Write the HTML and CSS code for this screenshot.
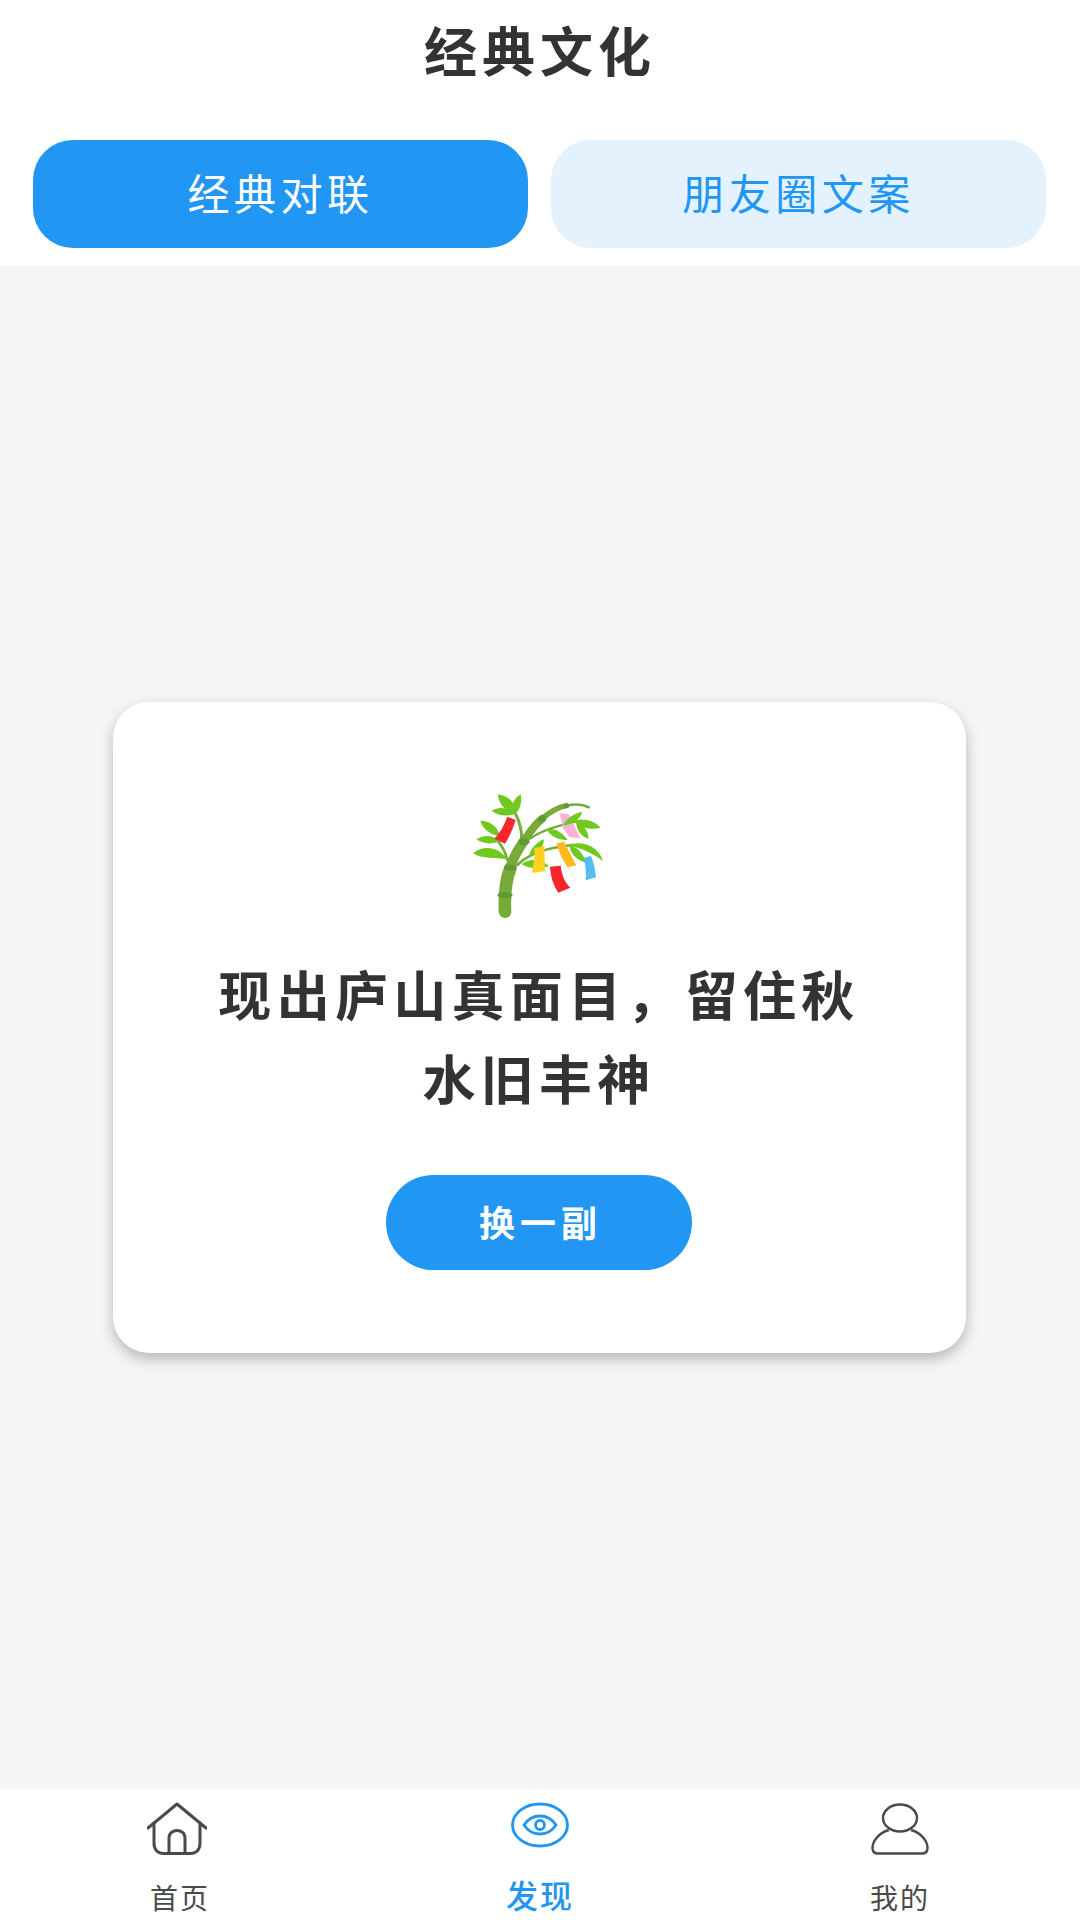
FILE: index.html
```html
<!DOCTYPE html>
<html lang="zh-CN">
<head>
    <meta charset="UTF-8">
    <meta name="viewport" content="width=device-width, initial-scale=1.0">
    <title>经典文化</title>
    <link rel="stylesheet" href="styles.css">
</head>
<body>
    <div class="page">
        <header class="top">
            <h1 class="page-title">经典文化</h1>
            <div class="tabs">
                <div class="tab tab-active">经典对联</div>
                <div class="tab">朋友圈文案</div>
            </div>
        </header>

        <main class="content">
            <section class="card">
                <svg class="bamboo" viewBox="0 0 600 480" aria-hidden="true">
                    <!-- stalk -->
                    <g fill="none" stroke="#76ab3a" stroke-linecap="round">
                        <path d="M198 425 C196 380 198 335 214 295" stroke-width="38"/>
                        <path d="M212 298 C222 265 235 240 254 214" stroke-width="30"/>
                        <path d="M254 214 C270 190 285 165 310 146" stroke-width="24"/>
                        <path d="M308 147 C330 128 355 112 382 107" stroke-width="16"/>
                        <path d="M382 107 C405 102 430 102 450 112" stroke-width="7"/>
                        <path d="M205 270 C200 250 192 232 178 215" stroke-width="8"/>
                        <path d="M248 205 C248 180 242 155 228 128" stroke-width="9"/>
                        <path d="M275 205 C310 180 360 165 425 152" stroke-width="7"/>
                        <path d="M235 285 C270 250 330 232 400 225" stroke-width="8"/>
                    </g>
                    <g fill="#5f9a34">
                        <ellipse cx="198" cy="375" rx="23" ry="9"/>
                        <ellipse cx="214" cy="293" rx="19" ry="9"/>
                        <ellipse cx="255" cy="215" rx="17" ry="10"/>
                        <ellipse cx="309" cy="146" rx="12" ry="9" transform="rotate(-35 309 146)"/>
                        <ellipse cx="382" cy="107" rx="8" ry="7"/>
                    </g>
                    <!-- pink tag sits behind the leaves -->
                    <path d="M362 130 L388 132 L424 204 L392 202 L372 175 Z" fill="#f9b3d9"/>
                    <!-- leaves -->
                    <g fill="#70c91f">
                        <path d="M176 73 C215 78 232 105 228 132 C200 125 180 105 176 73 Z"/>
                        <path d="M245 73 C250 100 242 120 228 132 C215 110 222 85 245 73 Z"/>
                        <path d="M158 122 C180 108 210 112 228 132 C205 140 178 138 158 122 Z"/>
                        <path d="M124 152 C155 152 178 172 182 198 C155 195 132 178 124 152 Z"/>
                        <path d="M112 208 C135 192 165 195 182 214 C160 224 130 222 112 208 Z"/>
                        <path d="M102 250 C130 225 180 228 204 268 C170 262 130 268 102 250 Z"/>
                        <path d="M430 125 C422 150 400 165 372 166 C382 145 405 130 430 125 Z"/>
                        <path d="M485 173 C460 145 425 145 405 155 C420 172 455 182 485 173 Z"/>
                        <path d="M448 207 C450 185 435 165 412 158 C412 180 425 198 448 207 Z"/>
                        <path d="M322 178 C345 172 372 188 386 210 C362 212 335 200 322 178 Z"/>
                        <path d="M314 208 C316 232 295 252 270 258 C275 235 292 218 314 208 Z"/>
                        <path d="M248 282 C272 262 308 268 330 288 C305 298 270 298 248 282 Z"/>
                        <path d="M492 274 C480 230 430 208 385 226 C420 232 465 250 492 274 Z"/>
                        <path d="M440 278 C435 255 418 232 392 226 C392 250 412 270 440 278 Z"/>
                    </g>
                    <!-- paper tags -->
                    <path d="M205 140 L230 150 C222 175 212 200 198 221 L166 206 C182 190 196 165 205 140 Z" fill="#f8252b"/>
                    <path d="M286 234 L316 228 L318 304 L278 309 C284 285 288 260 286 234 Z" fill="#ffd21f"/>
                    <path d="M352 220 L376 215 C388 240 400 265 412 286 L385 292 C372 270 358 245 352 220 Z" fill="#ffb81f"/>
                    <path d="M333 290 L365 287 C368 315 378 338 394 353 L358 368 C342 345 335 318 333 290 Z" fill="#f8252b"/>
                    <path d="M434 264 L456 257 C465 280 470 305 471 322 L440 331 C442 308 440 285 434 264 Z" fill="#52bfee"/>
                </svg>
                <p class="couplet">现出庐山真面目，留住秋水旧丰神</p>
                <button class="change-btn" type="button">换一副</button>
            </section>
        </main>

        <nav class="tabbar">
            <div class="nav-item">
                <svg class="nav-icon nav-icon-home" viewBox="0 0 60 52" fill="none" stroke="#4a4a4a" stroke-width="3" stroke-linecap="round" stroke-linejoin="round">
                    <path d="M1 25 L30 1 L59 25"/>
                    <path d="M7 20 V40 C7 47 11 50.5 17 50.5 H43 C49 50.5 53 47 53 40 V20"/>
                    <path d="M22 50.5 V35 C22 25 38 25 38 35 V50.5"/>
                </svg>
                <span class="nav-label">首页</span>
            </div>
            <div class="nav-item nav-item-active">
                <svg class="nav-icon" viewBox="0 0 60 52" fill="none" stroke="#2196f3" stroke-width="2.8">
                    <ellipse cx="30" cy="22" rx="27.5" ry="21"/>
                    <path d="M14 22 C22 10 38 10 46 22 C38 34 22 34 14 22 Z"/>
                    <circle cx="30" cy="22" r="4.5"/>
                </svg>
                <span class="nav-label">发现</span>
            </div>
            <div class="nav-item">
                <svg class="nav-icon" viewBox="0 0 60 52" fill="none" stroke="#4a4a4a" stroke-width="2.4">
                    <ellipse cx="30" cy="15" rx="17" ry="13.5"/>
                    <path d="M19 27 C8 30 2 39 2.5 46 C3 49 5 50.5 8 50.5 H52 C55 50.5 57 49 57.5 46 C58 39 52 30 41 27"/>
                </svg>
                <span class="nav-label">我的</span>
            </div>
        </nav>
    </div>
</body>
</html>
```

FILE: styles.css
```css
* {
    box-sizing: border-box;
}
body {
    margin: 0;
    font-family: "Noto Sans CJK SC", "Noto Sans", sans-serif;
    background-color: #fff;
}
.page {
    display: flex;
    flex-direction: column;
    width: 1080px;
    height: 1920px;
    overflow: hidden;
}
.top {
    height: 266px;
    background-color: #fff;
}
.page-title {
    margin: 0;
    padding-top: 15px;
    height: 140px;
    font-size: 53px;
    line-height: 68px;
    font-weight: 700;
    letter-spacing: 5px;
    text-align: center;
    color: #333;
}
.tabs {
    display: flex;
    gap: 23px;
    padding: 0 34px 0 33px;
}
.tab {
    flex: 1;
    height: 108px;
    line-height: 104px;
    border-radius: 40px;
    background-color: #e3f2fd;
    color: #2196f3;
    font-size: 42px;
    letter-spacing: 4.5px;
    text-align: center;
}
.tab-active {
    background-color: #2196f3;
    color: #fff;
}
.content {
    flex: 1;
    display: flex;
    align-items: center;
    justify-content: center;
    background-color: #f5f5f5;
}
.card {
    display: flex;
    flex-direction: column;
    align-items: center;
    width: 853px;
    height: 651px;
    margin-right: 2px;
    padding-top: 68px;
    background-color: #fff;
    border-radius: 36px;
    box-shadow: 0 6px 14px rgba(0, 0, 0, 0.25);
}
.bamboo {
    width: 200px;
    height: 160px;
}
.couplet {
    width: 660px;
    margin: 21px 0 0;
    font-size: 53px;
    line-height: 84px;
    font-weight: 700;
    letter-spacing: 5.3px;
    text-align: center;
    color: #333;
}
.change-btn {
    width: 306px;
    height: 95px;
    margin-top: 56px;
    padding: 0 0 3px 3px;
    border: none;
    border-radius: 48px;
    background-color: #2196f3;
    color: #fff;
    font-family: inherit;
    font-size: 36px;
    font-weight: 700;
    letter-spacing: 5px;
}
.tabbar {
    display: flex;
    height: 131px;
    background-color: #fff;
}
.nav-item {
    flex: 1;
    display: flex;
    flex-direction: column;
    align-items: center;
    padding-top: 13px;
}
.nav-icon {
    width: 60px;
    height: 54px;
}
.nav-icon-home {
    margin-left: -6px;
}
.nav-label {
    margin-top: 22px;
    font-size: 28px;
    line-height: 38px;
    letter-spacing: 2px;
    color: #4a4a4a;
}
.nav-item-active .nav-label {
    margin-top: 18px;
    font-size: 32px;
    line-height: 40px;
    font-weight: 500;
    letter-spacing: 2px;
    color: #2196f3;
}
```
